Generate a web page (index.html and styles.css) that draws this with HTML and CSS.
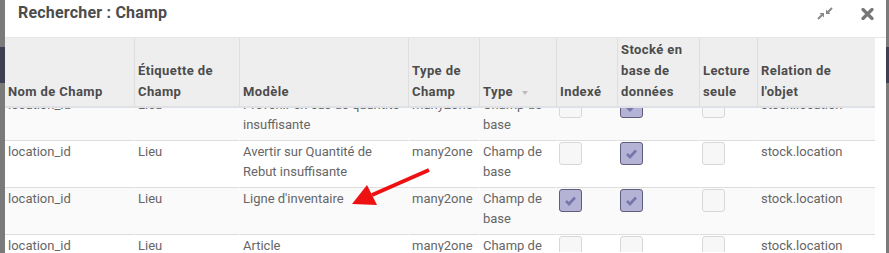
FILE: index.html
```html
<!DOCTYPE html>
<html lang="fr">
<head>
  <meta charset="UTF-8" />
  <title>Rechercher : Champ</title>
  <link rel="stylesheet" href="styles.css">
</head>
<body>
  <div class="modal">
    <div class="modal-header">
      <h4 class="modal-title">Rechercher : Champ</h4>
      <div class="modal-tools">
        <svg class="icon-compress" width="16" height="13" viewBox="0 0 16 13">
          <path d="M1 12 L5 8" stroke="#888" stroke-width="2" />
          <polygon points="7,6 2.5,6 7,10.5" fill="#888" />
          <path d="M15 1 L11 5" stroke="#888" stroke-width="2" />
          <polygon points="9,7 13.5,7 9,2.5" fill="#888" />
        </svg>
        <svg class="icon-close" width="13" height="12" viewBox="0 0 13 12">
          <path d="M2 1.5 L11 10.5 M11 1.5 L2 10.5" stroke="#777" stroke-width="3.2" stroke-linecap="round" />
        </svg>
      </div>
    </div>

    <div class="modal-body" id="body">
      <table class="list">
        <thead>
          <tr>
            <th class="c-name">Nom de Champ</th>
            <th class="c-label">Étiquette de Champ</th>
            <th class="c-model">Modèle</th>
            <th class="c-ftype">Type de Champ</th>
            <th class="c-type">Type <span class="caret"></span></th>
            <th class="c-idx">Indexé</th>
            <th class="c-store">Stocké en base de données</th>
            <th class="c-ro">Lecture seule</th>
            <th class="c-rel">Relation de l'objet</th>
          </tr>
        </thead>
        <tbody>
          <tr>
            <td>location_id</td>
            <td>Lieu</td>
            <td>Prévenir en cas de quantité insuffisante</td>
            <td>many2one</td>
            <td>Champ de base</td>
            <td><span class="check"></span></td>
            <td><span class="check on"></span></td>
            <td><span class="check"></span></td>
            <td>stock.location</td>
          </tr>
          <tr>
            <td>location_id</td>
            <td>Lieu</td>
            <td>Avertir sur Quantité de Rebut insuffisante</td>
            <td>many2one</td>
            <td>Champ de base</td>
            <td><span class="check"></span></td>
            <td><span class="check on"></span></td>
            <td><span class="check"></span></td>
            <td>stock.location</td>
          </tr>
          <tr>
            <td>location_id</td>
            <td>Lieu</td>
            <td>Ligne d'inventaire</td>
            <td>many2one</td>
            <td>Champ de base</td>
            <td><span class="check on"></span></td>
            <td><span class="check on"></span></td>
            <td><span class="check"></span></td>
            <td>stock.location</td>
          </tr>
          <tr>
            <td>location_id</td>
            <td>Lieu</td>
            <td>Article</td>
            <td>many2one</td>
            <td>Champ de base</td>
            <td><span class="check"></span></td>
            <td><span class="check"></span></td>
            <td><span class="check"></span></td>
            <td>stock.location</td>
          </tr>
        </tbody>
      </table>
    </div>

    <!-- annotation drawn over the screenshot -->
    <svg class="arrow" width="84" height="40" viewBox="0 0 84 40">
      <path d="M79 2 L22 27" stroke="#ee1111" stroke-width="4" />
      <polygon points="2,36 17,17 27,37" fill="#ee1111" />
    </svg>
  </div>

  <script>
    document.getElementById("body").scrollTop = 15;
  </script>
</body>
</html>
```

FILE: styles.css
```css
body {
  margin: 0;
  height: 253px;
  overflow: hidden;
  font-family: Roboto, "Liberation Sans", sans-serif;
  font-size: 13px;
  background: linear-gradient(to bottom, #7a7a7a 0 47px, #3d4052 47px 83px, #7a7a7a 83px);
}
.modal {
  position: relative;
  margin-left: 5px;
  width: 881px;
  height: 253px;
  background: #fff;
  overflow: hidden;
}
.modal-header {
  display: flex;
  align-items: flex-start;
  height: 38px;
  box-sizing: border-box;
  padding: 3px 12px 0 13px;
  border-bottom: 1px solid #e5e5e5;
}
.modal-title {
  margin: 0;
  font-size: 16px;
  line-height: 20px;
  font-weight: bold;
  letter-spacing: 0.2px;
  color: #4c4c4c;
}
.modal-tools {
  margin-left: auto;
  margin-top: 4px;
  display: flex;
  align-items: center;
  gap: 28px;
}
.modal-body {
  height: 214px;
  overflow: hidden;
  padding-right: 11px;
}
.list {
  width: 870px;
  table-layout: fixed;
  border-collapse: separate;
  border-spacing: 0;
}
.list th {
  position: sticky;
  top: 0;
  box-sizing: border-box;
  background: #eeeeee;
  color: #4c4c4c;
  font-weight: bold;
  letter-spacing: 0.4px;
  text-align: left;
  vertical-align: bottom;
  line-height: 21px;
  padding: 1px 3px 4px 3px;
  border-bottom: 2px solid #dee2e6;
}
.list th + th {
  border-left: 1px solid #dedede;
}
.c-name { width: 129px; }
.c-label { width: 105px; }
.c-model { width: 169px; }
.c-ftype { width: 71px; }
.c-type { width: 77px; }
.c-idx { width: 61px; }
.c-store { width: 82px; }
.c-ro { width: 58px; }
.c-rel { width: 118px; }
.caret {
  display: inline-block;
  margin-left: 5px;
  vertical-align: middle;
  border-left: 3px solid transparent;
  border-right: 3px solid transparent;
  border-top: 4px solid #bbb;
}
.list td {
  color: #666;
  line-height: 19.5px;
  vertical-align: top;
  padding: 1px 3px 6px 3px;
  border-top: 1px solid #dddddd;
}
.list td + td {
  border-left: 1px solid transparent;
}
.list tbody tr:nth-child(odd) td {
  background: #fafafa;
}
.check {
  display: block;
  width: 23px;
  height: 23px;
  box-sizing: border-box;
  margin-left: -1px;
  border: 1px solid #d8d8d8;
  border-radius: 3px;
  background: #f7f7f7;
}
.check.on {
  border-color: #5e5d7c;
  background: #b4b3d6 url("data:image/svg+xml,%3Csvg xmlns='http://www.w3.org/2000/svg' width='21' height='21'%3E%3Cpath d='M6 11 L9 14 L15 7.5' stroke='%237775aa' stroke-width='2.6' fill='none'/%3E%3C/svg%3E") no-repeat center;
}
.arrow {
  position: absolute;
  left: 345px;
  top: 168px;
}
```
